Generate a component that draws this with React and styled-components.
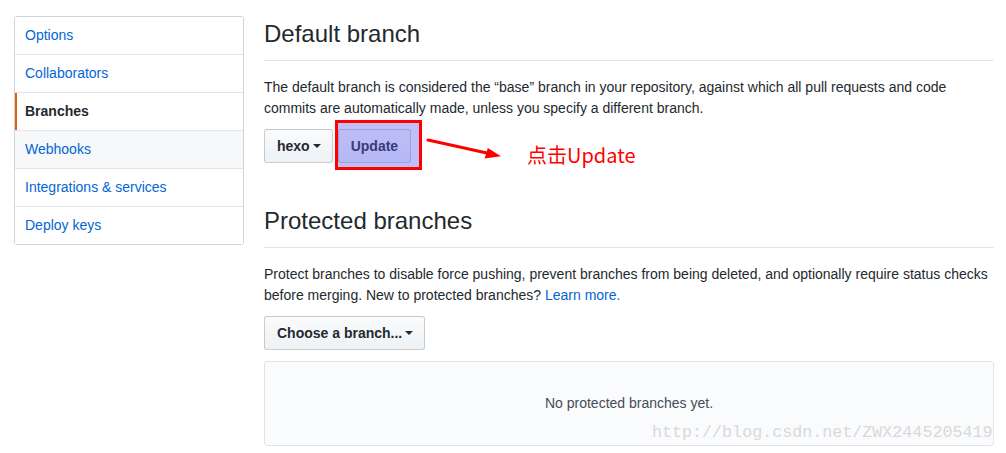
import React from "react";
import styled, { createGlobalStyle } from "styled-components";

const Global = createGlobalStyle`
  html, body { margin: 0; padding: 0; background: #fff; }
  body {
    font-family: "Liberation Sans", Arial, sans-serif;
    font-size: 14px;
    line-height: 1.5;
    color: #24292e;
  }
  * { box-sizing: border-box; }
`;

const Page = styled.div`
  position: relative;
  display: flex;
  align-items: flex-start;
  gap: 20px;
  padding: 16px 12px 0 14px;
  width: 1006px;
  height: 453px;
  overflow: hidden;
`;

const Menu = styled.nav`
  width: 230px;
  flex: none;
  border: 1px solid #d1d5da;
  border-radius: 3px;
  background: #fff;
  overflow: hidden;
`;

const MenuItem = styled.a`
  display: block;
  padding: 8px 10px;
  line-height: 21px;
  border-bottom: 1px solid #e1e4e8;
  color: ${(p) => (p.$selected ? "#24292e" : "#0366d6")};
  font-weight: ${(p) => (p.$selected ? "bold" : "normal")};
  background: ${(p) => (p.$hover ? "#f6f8fa" : "#fff")};
  text-decoration: none;
  position: relative;
  &:last-child { border-bottom: 0; }
  ${(p) =>
    p.$selected &&
    `&::before {
      content: "";
      position: absolute;
      left: 0; top: 0; bottom: 0;
      width: 2px;
      background: #e36209;
    }`}
`;

const Main = styled.main`
  flex: 1;
  min-width: 0;
`;

const Subhead = styled.div`
  border-bottom: 1px solid #e1e4e8;
  padding-bottom: 8px;
  margin-bottom: 16px;
  margin-top: ${(p) => (p.$spacious ? "40px" : "0")};
`;

const Heading = styled.h2`
  margin: 0;
  font-size: 24px;
  font-weight: normal;
  line-height: 36px;
`;

const Para = styled.p`
  margin: 0 0 10px;
  line-height: 21px;
`;

const Link = styled.a`
  color: #0366d6;
  text-decoration: none;
`;

const Row = styled.div`
  position: relative;
  display: flex;
  gap: 5px;
  align-items: center;
`;

const Button = styled.button`
  display: inline-flex;
  align-items: center;
  padding: 6px ${(p) => (p.$caret ? "11px" : "12px")} 6px 12px;
  font-family: inherit;
  font-size: 14px;
  font-weight: bold;
  line-height: 20px;
  color: #24292e;
  background: linear-gradient(-180deg, #fafbfc 0%, #eff3f6 90%);
  border: 1px solid rgba(27, 31, 35, 0.2);
  border-radius: 3px;
  cursor: pointer;
`;

const Caret = styled.span`
  display: inline-block;
  margin-left: 3px;
  width: 0;
  height: 0;
  border-top: 4px solid #24292e;
  border-left: 4px solid transparent;
  border-right: 4px solid transparent;
`;

const Highlight = styled.span`
  position: relative;
  display: inline-flex;
`;

const RedBox = styled.span`
  position: absolute;
  left: -3px;
  top: -9px;
  right: -11px;
  bottom: -7px;
  border: 3px solid #ff0000;
  background: rgba(90, 90, 240, 0.38);
  pointer-events: none;
`;

const ArrowSvg = styled.svg`
  position: absolute;
  left: 161px;
  top: 3px;
`;

const Note = styled.span`
  position: absolute;
  left: 263px;
  top: 12px;
  font-family: "Noto Sans CJK SC", "Noto Sans", sans-serif;
  font-size: 20px;
  line-height: 28px;
  color: #ff0000;
  white-space: nowrap;
`;

const Blank = styled.div`
  margin-top: 11px;
  padding: 31px 16px;
  background: #fafbfc;
  border: 1px solid #e1e4e8;
  border-radius: 3px;
  text-align: center;
  line-height: 21px;
  color: #444d56;
`;

const Watermark = styled.span`
  position: absolute;
  left: 652px;
  top: 422px;
  font-family: "Liberation Mono", "DejaVu Sans Mono", monospace;
  font-size: 16.7px;
  line-height: 22px;
  color: #d9d9d9;
  white-space: nowrap;
  pointer-events: none;
`;

const items = [
  { label: "Options" },
  { label: "Collaborators" },
  { label: "Branches", selected: true },
  { label: "Webhooks", hover: true },
  { label: "Integrations & services" },
  { label: "Deploy keys" },
];

export default function App() {
  return (
    <>
      <Global />
      <Page>
        <Menu>
          {items.map((it) => (
            <MenuItem key={it.label} href="#" $selected={it.selected} $hover={it.hover}>
              {it.label}
            </MenuItem>
          ))}
        </Menu>
        <Main>
          <Subhead>
            <Heading>Default branch</Heading>
          </Subhead>
          <Para>
            The default branch is considered the “base” branch in your repository, against which all pull requests and code
            commits are automatically made, unless you specify a different branch.
          </Para>
          <Row>
            <Button $caret>
              hexo
              <Caret />
            </Button>
            <Highlight>
              <Button>Update</Button>
              <RedBox />
            </Highlight>
            <ArrowSvg width="80" height="32" viewBox="0 0 80 32">
              <line x1="3" y1="8" x2="63" y2="21.3" stroke="#ff0000" strokeWidth="3" strokeLinecap="round" />
              <polygon points="76,24.3 59.6,26.6 62.8,16" fill="#ff0000" />
            </ArrowSvg>
            <Note>点击Update</Note>
          </Row>
          <Subhead $spacious>
            <Heading>Protected branches</Heading>
          </Subhead>
          <Para>
            Protect branches to disable force pushing, prevent branches from being deleted, and optionally require status checks
            before merging. New to protected branches? <Link href="#">Learn more.</Link>
          </Para>
          <Row>
            <Button $caret>
              Choose a branch...
              <Caret />
            </Button>
          </Row>
          <Blank>No protected branches yet.</Blank>
        </Main>
        <Watermark>http://blog.csdn.net/ZWX2445205419</Watermark>
      </Page>
    </>
  );
}
